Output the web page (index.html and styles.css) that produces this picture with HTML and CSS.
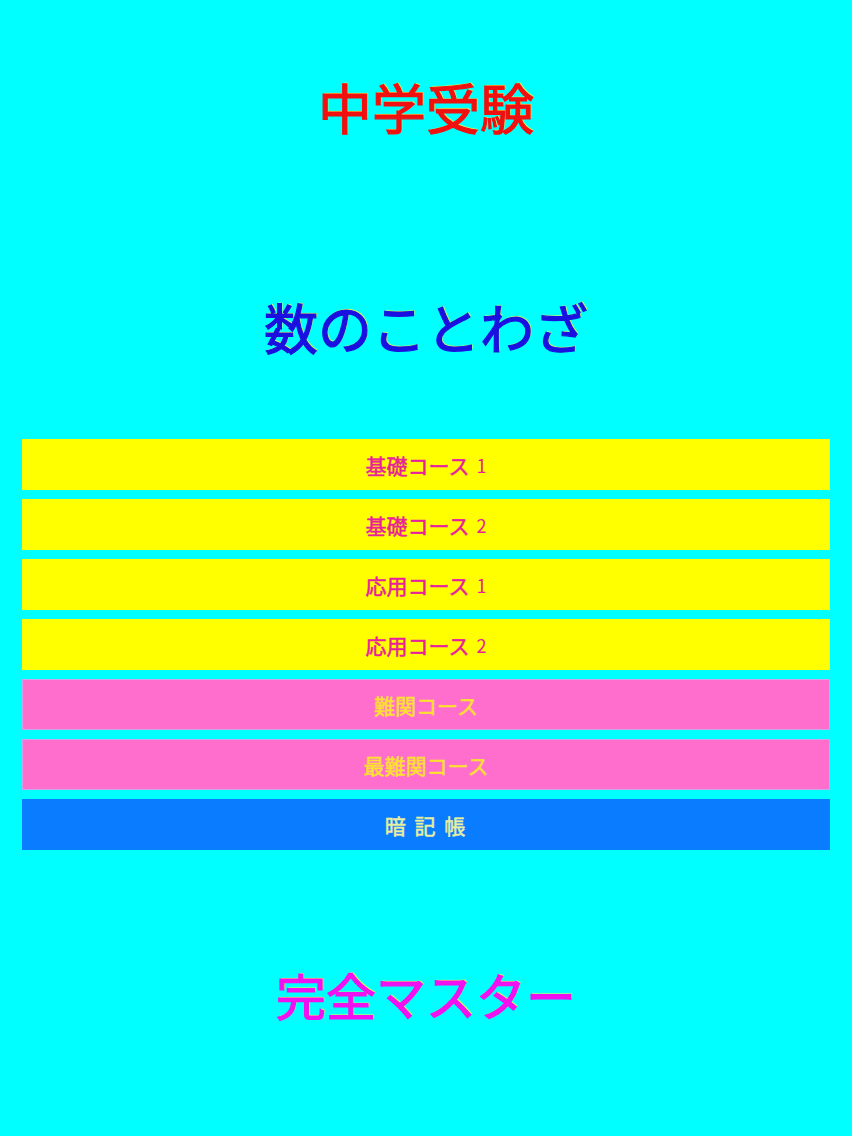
FILE: index.html
```html
<!DOCTYPE html>
<html lang="ja">
<head>
<meta charset="utf-8">
<title>中学受験 数のことわざ 完全マスター</title>
<link rel="stylesheet" href="styles.css">
</head>
<body>
<div class="page">
  <h1 class="title title-top">中学受験</h1>
  <h1 class="title title-main">数のことわざ</h1>
  <nav class="menu">
    <div class="btn btn-yellow">基礎コース<span class="num">1</span></div>
    <div class="btn btn-yellow">基礎コース<span class="num">2</span></div>
    <div class="btn btn-yellow">応用コース<span class="num">1</span></div>
    <div class="btn btn-yellow">応用コース<span class="num">2</span></div>
    <div class="btn btn-pink">難関コース</div>
    <div class="btn btn-pink">最難関コース</div>
    <div class="btn btn-blue">暗 記 帳</div>
  </nav>
  <h1 class="title title-bottom">完全マスター</h1>
</div>
</body>
</html>
```

FILE: styles.css
```css
html, body {
  margin: 0;
  padding: 0;
  background: #00ffff;
}
body {
  font-family: "Noto Sans CJK JP", "Noto Sans", sans-serif;
}
.page {
  width: 852px;
  height: 1136px;
  display: flex;
  flex-direction: column;
  align-items: stretch;
  padding-top: 74px;
  box-sizing: border-box;
}
.title {
  margin: 0;
  text-align: center;
  font-weight: 400;
  line-height: 65px;
  font-size: 54px;
  -webkit-text-stroke: 1.2px currentColor;
  text-shadow: 1px -1px 1px #ffff40;
}
.title-top {
  color: #f01010;
}
.title-main {
  margin-top: 155px;
  color: #1a10e0;
}
.title-bottom {
  margin-top: 112px;
  color: #f010f0;
  font-size: 50px;
}
.menu {
  margin-top: 80px;
  padding: 0 22px;
  display: flex;
  flex-direction: column;
  gap: 9px;
}
.btn {
  height: 51px;
  box-sizing: border-box;
  display: flex;
  align-items: center;
  justify-content: center;
  font-size: 21px;
  font-weight: 400;
  -webkit-text-stroke: 0.5px currentColor;
}
.num {
  margin-left: 7px;
  font-size: 18px;
  -webkit-text-stroke: 0;
}
.btn-yellow {
  background: #ffff00;
  color: #e8209c;
}
.btn-pink {
  background: #ff6ecc;
  border: 1px solid #c8a8e8;
  color: #ffe030;
}
.btn-blue {
  background: #0a7cff;
  color: #e8f0a0;
  letter-spacing: 2px;
}
```
